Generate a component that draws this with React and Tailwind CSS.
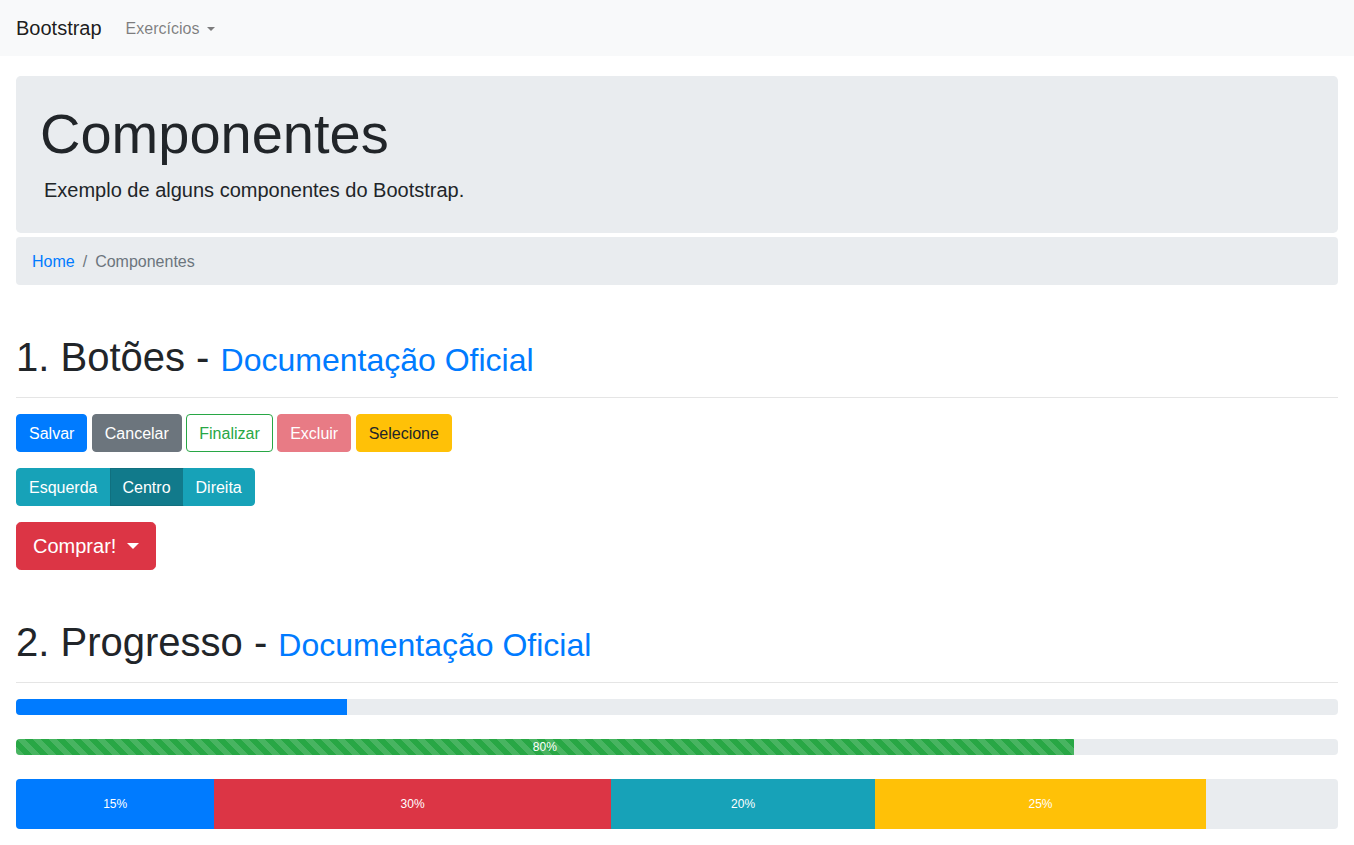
export default function App() {
  const stripes =
    "bg-[linear-gradient(45deg,rgba(255,255,255,.15)_25%,transparent_25%,transparent_50%,rgba(255,255,255,.15)_50%,rgba(255,255,255,.15)_75%,transparent_75%,transparent)] bg-[length:16px_16px]";
  return (
    <div className="min-h-[845px] bg-white text-[#212529] font-['Liberation_Sans',Arial,sans-serif] text-[16px] leading-6">
      <nav className="h-14 bg-[#f8f9fa] flex items-center px-4">
        <a className="text-[20px] leading-[30px] text-[rgba(0,0,0,0.9)] mr-4">Bootstrap</a>
        <a className="px-2 pt-[2px] text-[rgba(0,0,0,0.5)] flex items-center">
          Exercícios
          <span className="inline-block ml-[8px] w-0 h-0 border-t-[4.8px] border-t-current border-x-[4.8px] border-x-transparent"></span>
        </a>
      </nav>

      <div className="px-4 pt-5">
        <div className="bg-[#e9ecef] rounded-[4.8px] px-6 pt-6 pb-[28px]">
          <h1 className="text-[56px] font-light leading-[1.2] mb-2">Componentes</h1>
          <p className="text-[20px] leading-[30px] font-light ml-1">Exemplo de alguns componentes do Bootstrap.</p>
        </div>

        <div className="mt-1 bg-[#e9ecef] rounded-[4px] px-4 pt-[13px] pb-[11px] flex items-center">
          <a className="text-[#007bff]">Home</a>
          <span className="px-2 text-[#6c757d]">/</span>
          <span className="text-[#6c757d]">Componentes</span>
        </div>

        <h1 className="mt-12 text-[40px] leading-[48px]">
          1. Botões - <a className="text-[#007bff] text-[32px]">Documentação Oficial</a>
        </h1>
        <hr className="mt-[13px] mb-4 border-0 border-t border-[rgba(0,0,0,0.1)]" />

        <div className="flex gap-[4.45px]">
          <button className="px-3 pt-[7px] pb-[5px] border border-[#007bff] bg-[#007bff] text-white rounded-[4px] leading-6">Salvar</button>
          <button className="px-3 pt-[7px] pb-[5px] border border-[#6c757d] bg-[#6c757d] text-white rounded-[4px] leading-6">Cancelar</button>
          <button className="px-3 pt-[7px] pb-[5px] border border-[#28a745] bg-white text-[#28a745] rounded-[4px] leading-6">Finalizar</button>
          <button className="px-3 pt-[7px] pb-[5px] border border-[#dc3545] bg-[#dc3545] text-white rounded-[4px] leading-6 opacity-65">Excluir</button>
          <button className="px-3 pt-[7px] pb-[5px] border border-[#ffc107] bg-[#ffc107] text-[#212529] rounded-[4px] leading-6">Selecione</button>
        </div>

        <div className="mt-4 flex">
          <button className="px-3 pt-[7px] pb-[5px] border border-[#17a2b8] bg-[#17a2b8] text-white rounded-l-[4px] leading-6">Esquerda</button>
          <button className="-ml-px px-3 pt-[7px] pb-[5px] border border-[#10707f] bg-[#117a8b] text-white leading-6">Centro</button>
          <button className="-ml-px px-3 pt-[7px] pb-[5px] border border-[#17a2b8] bg-[#17a2b8] text-white rounded-r-[4px] leading-6">Direita</button>
        </div>

        <div className="mt-4 flex">
          <button className="px-4 py-2 border border-[#dc3545] bg-[#dc3545] text-white rounded-[4.8px] text-[20px] leading-[30px] flex items-center">
            Comprar!
            <span className="inline-block ml-[11px] w-0 h-0 border-t-[6px] border-t-current border-x-[6px] border-x-transparent"></span>
          </button>
        </div>

        <h1 className="mt-12 text-[40px] leading-[48px]">
          2. Progresso - <a className="text-[#007bff] text-[32px]">Documentação Oficial</a>
        </h1>
        <hr className="mt-[13px] mb-4 border-0 border-t border-[rgba(0,0,0,0.1)]" />

        <div className="h-4 bg-[#e9ecef] rounded-[4px] overflow-hidden flex">
          <div className="w-[25%] bg-[#007bff]"></div>
        </div>

        <div className="mt-6 h-4 bg-[#e9ecef] rounded-[4px] overflow-hidden flex text-[12px] leading-4">
          <div className={`w-[80%] bg-[#28a745] ${stripes} text-white text-center`}>80%</div>
        </div>

        <div className="mt-6 h-[50px] bg-[#e9ecef] rounded-[4px] overflow-hidden flex text-[12px] text-white">
          <div className="w-[15%] bg-[#007bff] flex items-center justify-center">15%</div>
          <div className="w-[30%] bg-[#dc3545] flex items-center justify-center">30%</div>
          <div className="w-[20%] bg-[#17a2b8] flex items-center justify-center">20%</div>
          <div className="w-[25%] bg-[#ffc107] flex items-center justify-center">25%</div>
        </div>
      </div>
    </div>
  );
}
